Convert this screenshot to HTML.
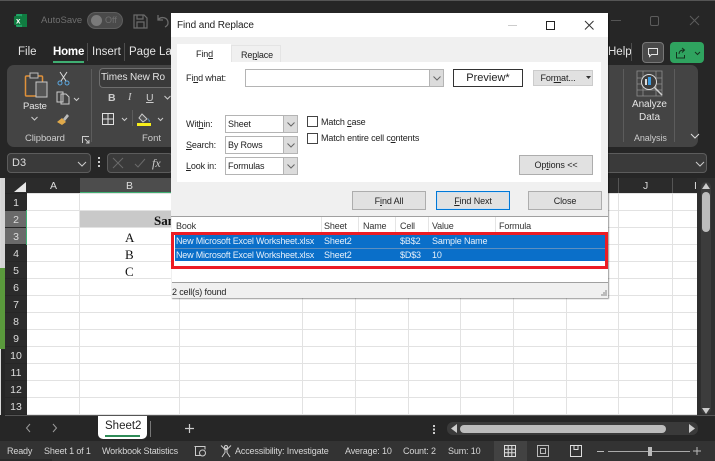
<!DOCTYPE html>
<html><head><meta charset="utf-8"><style>
*{box-sizing:border-box}
html,body{margin:0;padding:0;width:715px;height:461px;overflow:hidden;background:#262626}
body{position:relative;font-family:"Liberation Sans",sans-serif}
.a{position:absolute}
.t{position:absolute;white-space:nowrap;line-height:1;font-size:10px}
.s{font-size:9px;letter-spacing:-.15px}
.st{top:447px;color:#d5d5d5}
.w{color:#e4e4e4}.k{color:#222}
.rh{position:absolute;left:5px;width:22px;height:16px;background:#2b2b2b;color:#ddd;font-size:10.5px;line-height:18px;text-align:center}
.btn{position:absolute;background:#e1e1e1;border:1px solid #adadad;color:#222;font-size:9px;letter-spacing:-.1px;text-align:center}
.combo{position:absolute;background:#fff;border:1px solid #b4b4b4}
.combo i{position:absolute;right:0;top:0;bottom:0;width:14px;background:#dcdcdc;border-left:1px solid #b4b4b4}
.sv{position:absolute;overflow:visible}
u{text-decoration:underline}
</style></head><body>
<!-- top bar -->
<div class="a" style="left:0;top:0;width:715px;height:1px;background:#555"></div>
<svg class="sv" style="left:13px;top:13px" width="15" height="15"><rect x="3" y="1" width="11" height="13" rx="1" fill="#21a366"/><rect x="9" y="1" width="5" height="13" fill="#107c41"/><rect x="1" y="3" width="8" height="9" rx="1" fill="#107c41"/><text x="3" y="10.5" font-size="8" font-weight="bold" fill="#fff" font-family="Liberation Sans">x</text></svg>
<div class="t" style="left:41px;top:16px;font-size:9.5px;color:#6f6f6f">AutoSave</div>
<div class="a" style="left:87px;top:12px;width:36px;height:17px;border-radius:9px;background:#4a4a4a;border:1px solid #5e5e5e"></div>
<div class="a" style="left:91px;top:15px;width:11px;height:11px;border-radius:50%;background:#7a7a7a"></div>
<div class="t" style="left:105px;top:16px;font-size:9px;color:#6f6f6f">Off</div>
<svg class="sv" style="left:133px;top:14px" width="15" height="15" fill="none" stroke="#6b6b6b" stroke-width="1.2"><path d="M1 1h10l3 3v10H1zM4 1v4h6V1M4 14V8h7v6"/></svg>
<svg class="sv" style="left:156px;top:14px" width="14" height="14" fill="none" stroke="#6b6b6b" stroke-width="1.3"><path d="M2 1v5h5M2 6c3-4 10-3 10 3 0 2-1 3-3 4"/></svg>
<!-- window controls -->
<div class="a" style="left:611px;top:20px;width:10px;height:1px;background:#555"></div>
<div class="a" style="left:650px;top:16px;width:9px;height:10px;border:1px solid #5c5c5c;border-radius:2px"></div>
<svg class="sv" style="left:689px;top:15px" width="12" height="12" stroke="#5c5c5c" stroke-width="1"><path d="M1 1l9 9M10 1l-9 9"/></svg>
<!-- menu -->
<div class="t w" style="left:18px;top:47px;font-size:11.5px">File</div>
<div class="t" style="left:53px;top:47px;font-size:11.5px;color:#fff;font-weight:bold;letter-spacing:-.2px">Home</div>
<div class="a" style="left:53px;top:61px;width:31px;height:2px;background:#3fae72"></div>
<div class="a" style="left:87px;top:43px;width:1px;height:18px;background:#4d4d4d"></div>
<div class="t w" style="left:92px;top:47px;font-size:11.5px">Insert</div>
<div class="a" style="left:124px;top:43px;width:1px;height:18px;background:#4d4d4d"></div>
<div class="t w" style="left:129px;top:47px;font-size:11.5px">Page Layout</div>
<div class="t w" style="left:608px;top:47px;font-size:11.5px">Help</div>
<div class="a" style="left:631px;top:43px;width:1px;height:18px;background:#4d4d4d"></div>
<div class="a" style="left:642px;top:42px;width:22px;height:21px;border-radius:4px;background:#4a4a4a;border:1px solid #777"></div>
<svg class="sv" style="left:647px;top:47px" width="12" height="12" fill="none" stroke="#e4e4e4"><path d="M1.5 1.5h9v6h-6l-2 2v-2h-1z"/></svg>
<div class="a" style="left:670px;top:42px;width:34px;height:21px;border-radius:4px;background:#2fa35f"></div>
<svg class="sv" style="left:675px;top:47px" width="26" height="12" fill="none" stroke="#16331f" stroke-width="1"><path d="M1.5 5v6h8V8M4 7c0-3 2-4 5-4M7 1l2.5 2L7 5.5M20 5l2.5 2.500L25 5"/></svg>
<!-- ribbon -->
<div class="a" style="left:7px;top:65px;width:691px;height:82px;background:#444;border-radius:7px"></div>
<svg class="sv" style="left:24px;top:72px" width="25" height="26" fill="none"><rect x="1.5" y="4" width="17" height="20" rx="1" stroke="#e0913a" stroke-width="1.5"/><rect x="6" y="1" width="8" height="5" fill="#444" stroke="#bbb"/><rect x="12" y="10" width="11" height="15" fill="#555" stroke="#c8c8c8"/></svg>
<div class="t w" style="left:23px;top:102px;font-size:9.5px;letter-spacing:-.1px">Paste</div>
<svg class="sv" style="left:30px;top:116px" width="9" height="6" fill="none" stroke="#ccc"><path d="M1.5 1l3 3 3-3"/></svg>
<svg class="sv" style="left:57px;top:71px" width="13" height="15" fill="none" stroke="#ddd"><path d="M3 1l6 9M10 1l-6 9"/><circle cx="3" cy="12" r="2" stroke="#5aa7e0"/><circle cx="10" cy="12" r="2" stroke="#5aa7e0"/></svg>
<svg class="sv" style="left:56px;top:91px" width="24" height="14" fill="none" stroke="#ccc"><path d="M1 1h6v10H1zM5 3h5l3 3v7H5z"/><path d="M18 7l2.5 2.5L23 7"/></svg>
<svg class="sv" style="left:56px;top:112px" width="14" height="14"><path d="M7 7l4-5 2 2-4 5z" fill="#bbb"/><path d="M1 10l5-4 4 4-4 3z" fill="#e0a94a"/></svg>
<div class="t" style="left:25px;top:134px;font-size:9.5px;letter-spacing:-.1px;color:#ccc">Clipboard</div>
<svg class="sv" style="left:82px;top:136px" width="8" height="8" fill="none" stroke="#ccc"><path d="M.5 7V.5H7M3 3l4 4M4 7h3V4"/></svg>
<div class="a" style="left:91px;top:69px;width:1px;height:73px;background:#5c5c5c"></div>
<div class="a" style="left:99px;top:68px;width:75px;height:20px;background:#3a3a3a;border:1px solid #6e6e6e;border-radius:4px 0 0 4px;border-right:0"></div>
<div class="t w" style="left:101px;top:73px;font-size:10px;letter-spacing:-.1px">Times New Ro</div>
<div class="t" style="left:108px;top:93px;font-size:10.5px;font-weight:bold;color:#ccc">B</div>
<div class="t" style="left:128px;top:93px;font-size:10.5px;font-style:italic;color:#ccc;font-family:'Liberation Serif',serif">I</div>
<div class="t" style="left:146px;top:93px;font-size:10.5px;color:#ccc;text-decoration:underline">U</div>
<svg class="sv" style="left:163px;top:95px" width="9" height="6" fill="none" stroke="#ccc"><path d="M1.5 1l3 3 3-3"/></svg>
<svg class="sv" style="left:101px;top:112px" width="30" height="14" fill="none" stroke="#e0e0e0"><path d="M1.5 1.5h11v11h-11zM7 1.5v11M1.5 7h11"/><path d="M21 6l2.5 2.5L26 6" stroke="#ccc"/></svg>
<div class="a" style="left:132px;top:110px;width:1px;height:16px;background:#5c5c5c"></div>
<svg class="sv" style="left:137px;top:112px" width="32" height="15"><path d="M5 2l5 5-4 3-4-4z" fill="#555" stroke="#ccc"/><path d="M11 6l2 3-1 1z" fill="#5aa7e0"/><rect y="11" width="14" height="3" fill="#f7ee1b"/><path d="M21 6l2.5 2.5L26 6" fill="none" stroke="#ccc"/></svg>
<div class="t" style="left:142px;top:134px;font-size:9.5px;color:#ccc">Font</div>
<!-- analysis -->
<svg class="sv" style="left:636px;top:70px" width="27" height="27" fill="none" stroke="#cfcfcf" stroke-width=".8"><path d="M1 1h25v25H1zM1 8h25M1 14h25M1 20h25M7 1v25M20 1v25" stroke="#8e8e8e"/><circle cx="13" cy="12" r="7.5" fill="#3d3d3d" stroke="#ddd" stroke-width="1"/><rect x="9" y="9" width="2" height="6" fill="#ddd" stroke="none"/><rect x="12" y="7" width="3" height="8" fill="#3d9be0" stroke="none"/><path d="M18 17l8 8" stroke-width="1.5"/></svg>
<div class="t w" style="left:632px;top:100px;font-size:10px;letter-spacing:-.1px">Analyze</div>
<div class="t w" style="left:639px;top:113px;font-size:10px">Data</div>
<div class="t" style="left:634px;top:134px;font-size:9px;letter-spacing:-.1px;color:#ccc">Analysis</div>
<div class="a" style="left:623px;top:69px;width:1px;height:73px;background:#5c5c5c"></div>
<div class="a" style="left:674px;top:69px;width:1px;height:73px;background:#5c5c5c"></div>
<svg class="sv" style="left:690px;top:133px" width="11" height="7" fill="none" stroke="#ddd"><path d="M1 1l4 4 4-4"/></svg>
<!-- formula bar -->
<div class="a" style="left:7px;top:153px;width:84px;height:20px;background:#3a3a3a;border:1px solid #5c5c5c;border-radius:4px"></div>
<div class="t" style="left:12px;top:158px;font-size:11px;color:#ddd">D3</div>
<svg class="sv" style="left:77px;top:161px" width="10" height="6" fill="none" stroke="#ccc"><path d="M1 1l4 4 4-4"/></svg>
<div class="a" style="left:98px;top:157px;width:2px;height:2px;background:#ccc;box-shadow:0 4px #ccc,0 8px #ccc"></div>
<div class="a" style="left:107px;top:153px;width:66px;height:20px;background:#3a3a3a;border:1px solid #5c5c5c;border-radius:4px"></div>
<svg class="sv" style="left:112px;top:157px" width="36" height="12" fill="none" stroke="#6a6a6a"><path d="M1 1l10 10M11 1L1 11M23 7l3 3 7-8"/></svg>
<div class="t" style="left:152px;top:157px;font-size:12px;font-style:italic;color:#ccc;font-family:'Liberation Serif',serif">fx</div>
<div class="a" style="left:608px;top:153px;width:99px;height:20px;background:#3a3a3a;border:1px solid #5c5c5c;border-radius:0 4px 4px 0;border-left:0"></div>
<svg class="sv" style="left:695px;top:161px" width="10" height="6" fill="none" stroke="#ccc"><path d="M1 1l4 4 4-4"/></svg>
<!-- col header -->
<div class="a" style="left:0;top:178px;width:1px;height:237px;background:#d9d9d9"></div>
<div class="a" style="left:0;top:268px;width:5px;height:81px;background:#5a9a3c"></div>
<div class="a" style="left:1px;top:178px;width:4px;height:90px;background:#d4d4d4"></div>
<div class="a" style="left:5px;top:178px;width:692px;height:15px;background:#2b2b2b"></div>
<svg class="sv" style="left:14px;top:182px" width="12" height="10"><path d="M0 10L12 0v10z" fill="#e8e8e8"/></svg>
<div class="a" style="left:80px;top:178px;width:100px;height:15px;background:#4d4d4d;border-bottom:1px solid #3fae72"></div>
<div class="t" style="left:50px;top:181px;font-size:10.5px;color:#ddd">A</div>
<div class="t" style="left:126px;top:181px;font-size:10.5px;color:#ddd">B</div>
<div class="a" style="left:618px;top:178px;width:1px;height:15px;background:#555"></div>
<div class="a" style="left:672px;top:178px;width:1px;height:15px;background:#555"></div>
<div class="t" style="left:643px;top:181px;font-size:10.5px;color:#ddd">J</div>
<div class="t" style="left:694px;top:181px;font-size:10.5px;color:#ddd">I</div>
<!-- sheet -->
<div class="a" style="left:27px;top:193px;width:670px;height:222px;background-color:#fff;background-image:
linear-gradient(#e2e2e2,#e2e2e2),linear-gradient(#e2e2e2,#e2e2e2),linear-gradient(#e2e2e2,#e2e2e2),linear-gradient(#e2e2e2,#e2e2e2),linear-gradient(#e2e2e2,#e2e2e2),linear-gradient(#e2e2e2,#e2e2e2),linear-gradient(#e2e2e2,#e2e2e2),linear-gradient(#e2e2e2,#e2e2e2),linear-gradient(#e2e2e2,#e2e2e2),linear-gradient(#e2e2e2,#e2e2e2),linear-gradient(0deg,#e2e2e2 1px,transparent 1px);
background-size:1px 100%,1px 100%,1px 100%,1px 100%,1px 100%,1px 100%,1px 100%,1px 100%,1px 100%,1px 100%,100% 17px;
background-position:52px 0,152px 0,275px 0,328px 0,381px 0,433px 0,486px 0,539px 0,591px 0,645px 0,0 1px;background-repeat:no-repeat,no-repeat,no-repeat,no-repeat,no-repeat,no-repeat,no-repeat,no-repeat,no-repeat,no-repeat,repeat"></div>
<div class="a" style="left:80px;top:211px;width:91px;height:16px;background:#c9c9c9"></div>
<div class="t" style="left:154px;top:213px;font:bold 13px 'Liberation Serif',serif;color:#111">Sample Name</div>
<div class="t" style="left:125px;top:230px;font:13px 'Liberation Serif',serif;color:#111">A</div>
<div class="t" style="left:125px;top:247px;font:13px 'Liberation Serif',serif;color:#111">B</div>
<div class="t" style="left:125px;top:264px;font:13px 'Liberation Serif',serif;color:#111">C</div>
<div class="rh" style="top:194px">1</div>
<div class="rh" style="top:211px;background:#6a6a6a">2</div>
<div class="rh" style="top:228px;background:#6a6a6a">3</div>
<div class="rh" style="top:245px">4</div>
<div class="rh" style="top:262px">5</div>
<div class="rh" style="top:279px">6</div>
<div class="rh" style="top:296px">7</div>
<div class="rh" style="top:313px">8</div>
<div class="rh" style="top:330px">9</div>
<div class="rh" style="top:347px">10</div>
<div class="rh" style="top:364px">11</div>
<div class="rh" style="top:381px">12</div>
<div class="rh" style="top:398px">13</div>
<div class="a" style="left:26px;top:210px;width:1px;height:35px;background:#3fae72"></div>
<!-- v scrollbar -->
<div class="a" style="left:697px;top:178px;width:18px;height:237px;background:#2f2f2f"></div>
<div class="a" style="left:701px;top:182px;width:10px;height:232px;background:#3c3c3c;border-radius:5px"></div>
<svg class="sv" style="left:701px;top:183px" width="10" height="7"><path d="M5 0l4 6H1z" fill="#ccc"/></svg>
<div class="a" style="left:702px;top:192px;width:8px;height:40px;background:#bcbcbc;border-radius:4px"></div>
<svg class="sv" style="left:701px;top:408px" width="10" height="7"><path d="M5 6L1 0h8z" fill="#ccc"/></svg>
<!-- tabs -->
<div class="a" style="left:5px;top:415px;width:710px;height:1px;background:#555"></div>
<svg class="sv" style="left:25px;top:422px" width="35" height="12" fill="none" stroke="#9a9a9a"><path d="M5 2L1.5 6 5 10M28 2l3.5 4L28 10"/></svg>
<div class="a" style="left:98px;top:416px;width:49px;height:23px;background:#fff;border-radius:0 0 5px 5px"></div>
<div class="t" style="left:105px;top:421px;font-size:11.5px;color:#222">Sheet2</div>
<div class="a" style="left:105px;top:435px;width:35px;height:2px;background:#2e8b57"></div>
<div class="a" style="left:150px;top:421px;width:1px;height:16px;background:#777"></div>
<svg class="sv" style="left:184px;top:423px" width="11" height="11" stroke="#ccc" stroke-width="1.2"><path d="M5.5 1v9M1 5.5h9"/></svg>
<div class="a" style="left:433px;top:425px;width:2px;height:2px;background:#ccc;box-shadow:0 3.5px #ccc,0 7px #ccc"></div>
<div class="a" style="left:447px;top:422px;width:251px;height:13px;background:#3a3a3a;border-radius:6px"></div>
<svg class="sv" style="left:451px;top:424px" width="248" height="9"><path d="M0 4.500L6 0v9zM238 0l6 4.500-6 4.500z" fill="#ccc"/></svg>
<div class="a" style="left:460px;top:425px;width:206px;height:8px;background:#bcbcbc;border-radius:4px"></div>
<!-- status -->
<div class="a" style="left:0;top:441px;width:715px;height:20px;background:#333"></div>
<div class="a" style="left:0;top:459px;width:52px;height:2px;background:#2a2a2a"></div>
<div class="t s st" style="left:7px">Ready</div>
<div class="t s st" style="left:44px">Sheet 1 of 1</div>
<div class="t s st" style="left:102px">Workbook Statistics</div>
<svg class="sv" style="left:194px;top:445px" width="13" height="12" fill="none" stroke="#ccc"><path d="M.5 1.500h11M1.500 1.500v9h5M11 1.500v3"/><circle cx="8.5" cy="8" r="3"/></svg>
<svg class="sv" style="left:220px;top:444px" width="12" height="14" fill="none" stroke="#ccc"><circle cx="6" cy="3" r="1.5"/><path d="M1 1.500l4 4h2l4-4M5 5.500v3L2 13M7 5.500v3l3 4.500"/></svg>
<div class="t s st" style="left:235px">Accessibility: Investigate</div>
<div class="t s st" style="left:345px">Average: 10</div>
<div class="t s st" style="left:403px">Count: 2</div>
<div class="t s st" style="left:448px">Sum: 10</div>
<div class="a" style="left:494px;top:441px;width:33px;height:20px;background:#424242"></div>
<svg class="sv" style="left:504px;top:445px" width="12" height="12" fill="none" stroke="#ddd"><path d="M.5.500h11v11H.5zM4.200.500v11M7.800.500v11M.5 4.200h11M.5 7.800h11"/></svg>
<svg class="sv" style="left:537px;top:445px" width="12" height="12" fill="none" stroke="#bbb"><path d="M.5.500h11v11H.5zM3.500 3.500h5v5h-5z"/></svg>
<svg class="sv" style="left:570px;top:445px" width="12" height="12" fill="none" stroke="#ddd"><path d="M.5.500h11v11H.5zM4 .5v4h4v-4"/></svg>
<div class="a" style="left:597px;top:451px;width:7px;height:1px;background:#bbb"></div>
<div class="a" style="left:608px;top:451px;width:82px;height:1px;background:#aaa"></div>
<div class="a" style="left:648px;top:447px;width:4px;height:9px;background:#bbb"></div>
<svg class="sv" style="left:693px;top:447px" width="8" height="8" stroke="#bbb"><path d="M4 0v8M0 4h8"/></svg>
<!-- dialog -->
<div class="a" style="left:171px;top:13px;width:437px;height:285px;background:#f0f0f0;box-shadow:1px 1px 1px rgba(0,0,0,.4)"></div>
<div class="a" style="left:171px;top:13px;width:437px;height:24px;background:#fff"></div>
<div class="t k" style="left:177px;top:21px;font-size:10px;letter-spacing:-.1px">Find and Replace</div>
<div class="a" style="left:508px;top:25px;width:9px;height:1px;background:#ccc"></div>
<div class="a" style="left:546px;top:21px;width:9px;height:9px;border:1px solid #222"></div>
<svg class="sv" style="left:584px;top:20px" width="11" height="11" stroke="#333"><path d="M1 1l8.500 8.500M9.500 1L1 9.500"/></svg>
<div class="a" style="left:177px;top:62px;width:424px;height:120px;background:#fff"></div>
<div class="a" style="left:231px;top:45px;width:50px;height:17px;background:#f0f0f0;border:1px solid #e4e4e4;border-bottom:0"></div>
<div class="a" style="left:177px;top:44px;width:54px;height:19px;background:#fff"></div>
<div class="t k s" style="left:196px;top:50px">Fin<u>d</u></div>
<div class="t k s" style="left:241px;top:51px">Re<u>p</u>lace</div>
<div class="t k s" style="left:186px;top:74px">Fi<u>n</u>d what:</div>
<div class="combo" style="left:245px;top:69px;width:199px;height:18px"><i></i></div>
<svg class="sv" style="left:433px;top:76px" width="8" height="5" fill="none" stroke="#666"><path d="M.5.500L4 4 7.500.5"/></svg>
<div class="a" style="left:453px;top:69px;width:70px;height:18px;background:#fff;border:1px solid #333;color:#222;font-size:11px;line-height:17px;text-align:center">Preview*</div>
<div class="btn" style="left:533px;top:70px;width:60px;height:16px;line-height:15px;padding-right:10px;font-size:9px;border-color:#ccc">For<u>m</u>at...</div>
<svg class="sv" style="left:586px;top:76px" width="5" height="3"><path d="M0 0h5L2.500 3z" fill="#333"/></svg>
<div class="t k s" style="left:186px;top:120px">Wit<u>h</u>in:</div>
<div class="combo" style="left:225px;top:115px;width:73px;height:18px"><i></i></div>
<div class="t k s" style="left:228px;top:120px">Sheet</div>
<div class="t k s" style="left:186px;top:141px"><u>S</u>earch:</div>
<div class="combo" style="left:225px;top:136px;width:73px;height:18px"><i></i></div>
<div class="t k s" style="left:228px;top:141px">By Rows</div>
<div class="t k s" style="left:186px;top:162px"><u>L</u>ook in:</div>
<div class="combo" style="left:225px;top:157px;width:73px;height:18px"><i></i></div>
<div class="t k s" style="left:228px;top:162px">Formulas</div>
<svg class="sv" style="left:287px;top:122px" width="8" height="47" fill="none" stroke="#666"><path d="M.5.500L4 4 7.500.5M.5 21.500L4 25l3.500-3.500M.5 42.500L4 46l3.500-3.500"/></svg>
<div class="a" style="left:307px;top:116px;width:11px;height:11px;border:1px solid #444;background:#fff"></div>
<div class="t k s" style="left:321px;top:118px">Match <u>c</u>ase</div>
<div class="a" style="left:307px;top:133px;width:11px;height:11px;border:1px solid #444;background:#fff"></div>
<div class="t k s" style="left:321px;top:134px">Match entire cell c<u>o</u>ntents</div>
<div class="btn" style="left:519px;top:155px;width:74px;height:20px;line-height:19px">Op<u>t</u>ions &lt;&lt;</div>
<div class="btn" style="left:352px;top:191px;width:74px;height:19px;line-height:18px">F<u>i</u>nd All</div>
<div class="btn" style="left:436px;top:191px;width:74px;height:19px;line-height:18px;border:1px solid #0078d7;box-shadow:inset 0 0 0 1px #cfe0f0"><u>F</u>ind Next</div>
<div class="btn" style="left:528px;top:191px;width:74px;height:19px;line-height:18px">Close</div>
<!-- results -->
<div class="a" style="left:171px;top:216px;width:437px;height:1px;background:#a0a0a0"></div>
<div class="a" style="left:172px;top:217px;width:436px;height:65px;background:#fff"></div>
<div class="a" style="left:321px;top:217px;width:1px;height:16px;background:#e5e5e5"></div>
<div class="a" style="left:358px;top:217px;width:1px;height:16px;background:#e5e5e5"></div>
<div class="a" style="left:395px;top:217px;width:1px;height:16px;background:#e5e5e5"></div>
<div class="a" style="left:428px;top:217px;width:1px;height:16px;background:#e5e5e5"></div>
<div class="a" style="left:495px;top:217px;width:1px;height:16px;background:#e5e5e5"></div>
<div class="t s" style="left:176px;top:222px;color:#333">Book</div>
<div class="t s" style="left:324px;top:222px;color:#333">Sheet</div>
<div class="t s" style="left:363px;top:222px;color:#333">Name</div>
<div class="t s" style="left:400px;top:222px;color:#333">Cell</div>
<div class="t s" style="left:432px;top:222px;color:#333">Value</div>
<div class="t s" style="left:499px;top:222px;color:#333">Formula</div>
<div class="a" style="left:175px;top:235px;width:430px;height:13px;background:#0a6fc9"></div>
<div class="a" style="left:175px;top:248px;width:430px;height:1px;background:#5d8fc0"></div>
<div class="a" style="left:175px;top:249px;width:430px;height:12px;background:#0a6fc9"></div>
<div class="t s" style="left:176px;top:237px;color:#e6f0fa;letter-spacing:-.2px">New Microsoft Excel Worksheet.xlsx</div>
<div class="t s" style="left:324px;top:237px;color:#e6f0fa">Sheet2</div>
<div class="t s" style="left:400px;top:237px;color:#e6f0fa">$B$2</div>
<div class="t s" style="left:432px;top:237px;color:#e6f0fa">Sample Name</div>
<div class="t s" style="left:176px;top:251px;color:#e6f0fa;letter-spacing:-.2px">New Microsoft Excel Worksheet.xlsx</div>
<div class="t s" style="left:324px;top:251px;color:#e6f0fa">Sheet2</div>
<div class="t s" style="left:400px;top:251px;color:#e6f0fa">$D$3</div>
<div class="t s" style="left:432px;top:251px;color:#e6f0fa">10</div>
<div class="a" style="left:171px;top:232px;width:437px;height:37px;border:3px solid #ec1c24"></div>
<div class="a" style="left:172px;top:282px;width:436px;height:1px;background:#a0a0a0"></div>
<div class="t k s" style="left:172px;top:288px">2 cell(s) found</div>
<svg class="sv" style="left:600px;top:289px" width="8" height="8"><path d="M5 1h2v2H5zM3 3h2v2H3zM5 3h2v2H5zM1 5h2v2H1zM3 5h2v2H3zM5 5h2v2H5z" fill="#bbb"/></svg>
</body></html>
